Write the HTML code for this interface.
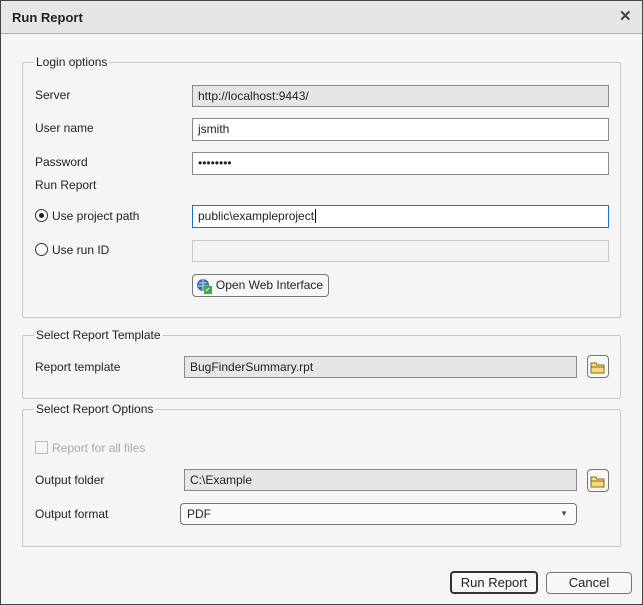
<!DOCTYPE html><html><head><style>
body{margin:0;width:643px;height:605px;overflow:hidden;font-family:"Liberation Sans",sans-serif;font-size:12px;color:#222}
.w{position:absolute;left:0;top:0;width:643px;height:605px;background:#f5f5f5}
.a{position:absolute}
.t{position:absolute;left:0;top:0;width:643px;height:33px;background:#e6e6e6;border-bottom:1px solid #b0b0b0}
.g{position:absolute;border:1px solid #c8c8c8;border-radius:2px}
.lg{position:absolute;background:#f5f5f5;padding:0 2px;top:-8px;left:11px}
.f{position:absolute;box-sizing:border-box;border:1px solid #8a8a8a;background:#fff;padding:0 5px;line-height:20px}
.d{background:#e6e6e6}
.b{position:absolute;box-sizing:border-box;border:1px solid #777;border-radius:4px;background:#f7f7f7;text-align:center}
.r{position:absolute;width:11px;height:11px;border:1px solid #333;border-radius:50%;background:#fff}
</style></head><body><div class="w">
<div class="t"><span class="a" style="left:12px;top:10px;font-weight:bold;font-size:13px">Run Report</span><span class="a" style="left:619px;top:7px;font-size:15px;font-weight:bold;color:#444">✕</span></div>
<div class="g" style="left:22px;top:62px;width:597px;height:254px"><span class="lg">Login options</span></div>
<span class="a" style="left:35px;top:88px">Server</span>
<div class="f d" style="left:192px;top:85px;width:417px;height:22px">http://localhost:9443/</div>
<span class="a" style="left:35px;top:121px">User name</span>
<div class="f" style="left:192px;top:118px;width:417px;height:23px;line-height:21px">jsmith</div>
<span class="a" style="left:35px;top:155px">Password</span>
<div class="f" style="left:192px;top:152px;width:417px;height:23px;line-height:21px">••••••••</div>
<span class="a" style="left:35px;top:178px">Run Report</span>
<div class="r" style="left:35px;top:209px"><div class="a" style="left:3px;top:3px;width:5px;height:5px;border-radius:50%;background:#222"></div></div>
<span class="a" style="left:52px;top:209px">Use project path</span>
<div class="f" style="left:192px;top:205px;width:417px;height:23px;border-color:#1a6fd0;line-height:21px">public\exampleproject<span style="border-left:1px solid #000;margin-left:1px"></span></div>
<div class="r" style="left:35px;top:243px"></div>
<span class="a" style="left:52px;top:243px">Use run ID</span>
<div class="f" style="left:192px;top:240px;width:417px;height:22px;border-color:#c8c8c8;background:#f3f3f3"></div>
<div class="b" style="left:192px;top:274px;width:137px;height:23px;line-height:21px;padding-left:18px"><svg class="a" style="left:3px;top:3px" width="16" height="16"><circle cx="7" cy="7" r="6" fill="#3b6fb0"/><path d="M3 5h8M2 8h10M7 1v12" stroke="#cde" stroke-width="1"/><rect x="8" y="8" width="8" height="8" fill="#4a4"/><path d="M10 13l3-3" stroke="#fff"/></svg>Open Web Interface</div>
<div class="g" style="left:22px;top:335px;width:597px;height:62px"><span class="lg">Select Report Template</span></div>
<span class="a" style="left:35px;top:360px">Report template</span>
<div class="f d" style="left:184px;top:356px;width:393px;height:22px">BugFinderSummary.rpt</div>
<div class="b" style="left:587px;top:355px;width:22px;height:23px"><svg width="20" height="20" style="margin-top:1px"><path d="M3 6h5l1 2h7v8H3z" fill="#f5dc80" stroke="#8a6a10"/><path d="M3 10h13" stroke="#8a6a10"/></svg></div>
<div class="g" style="left:22px;top:409px;width:597px;height:136px"><span class="lg">Select Report Options</span></div>
<div class="a" style="left:35px;top:441px;width:11px;height:11px;border:1px solid #bbb;background:#f5f5f5"></div>
<span class="a" style="left:52px;top:441px;color:#aaa">Report for all files</span>
<span class="a" style="left:35px;top:473px">Output folder</span>
<div class="f d" style="left:184px;top:469px;width:393px;height:22px">C:\Example</div>
<div class="b" style="left:587px;top:469px;width:22px;height:23px"><svg width="20" height="20" style="margin-top:1px"><path d="M3 6h5l1 2h7v8H3z" fill="#f5dc80" stroke="#8a6a10"/><path d="M3 10h13" stroke="#8a6a10"/></svg></div>
<span class="a" style="left:35px;top:507px">Output format</span>
<div class="b" style="left:180px;top:503px;width:397px;height:22px;text-align:left;padding-left:6px;line-height:20px;background:#fafafa">PDF<span class="a" style="right:8px;top:0;font-size:8px;color:#555">▼</span></div>
<div class="b" style="left:450px;top:571px;width:88px;height:23px;line-height:19px;border:2px solid #333;font-size:13px">Run Report</div>
<div class="b" style="left:546px;top:572px;width:86px;height:22px;line-height:20px;font-size:13px">Cancel</div>
<div class="a" style="left:0;top:0;width:641px;height:603px;border:1px solid #444"></div>
</div></body></html>
